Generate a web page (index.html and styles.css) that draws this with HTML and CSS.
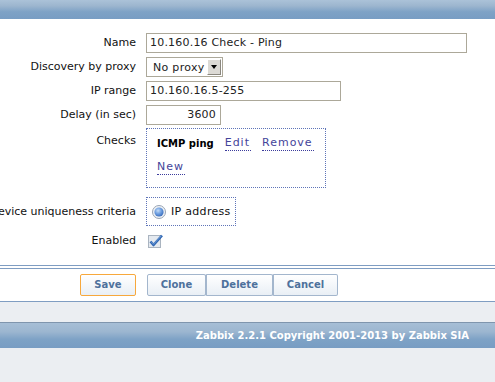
FILE: index.html
```html
<!DOCTYPE html>
<html>
<head>
<meta charset="utf-8">
<link rel="stylesheet" href="styles.css">
</head>
<body>
<div class="header"></div>
<div class="content">
  <div class="form">
    <div class="row">
      <div class="label">Name</div>
      <div class="input wide">10.160.16 Check - Ping</div>
    </div>
    <div class="row">
      <div class="label">Discovery by proxy</div>
      <div class="select"><span class="sel-text">No proxy</span><span class="sel-btn"><span class="tri"></span></span></div>
    </div>
    <div class="row">
      <div class="label">IP range</div>
      <div class="input mid">10.160.16.5-255</div>
    </div>
    <div class="row">
      <div class="label">Delay (in sec)</div>
      <div class="input small num">3600</div>
    </div>
    <div class="row top">
      <div class="label pad">Checks</div>
      <div class="checks">
        <div class="check-line"><span class="bold">ICMP ping</span><span class="link">Edit</span><span class="link">Remove</span></div>
        <div class="check-line second"><span class="link">New</span></div>
      </div>
    </div>
    <div class="row uniq">
      <div class="label">Device uniqueness criteria</div>
      <div class="radio-box">
        <svg class="radio" width="14" height="14" viewBox="0 0 14 14">
          <defs>
            <radialGradient id="rg" cx="0.4" cy="0.35" r="0.7">
              <stop offset="0" stop-color="#c4dcf7"/>
              <stop offset="0.5" stop-color="#6f9fe0"/>
              <stop offset="1" stop-color="#3568b8"/>
            </radialGradient>
          </defs>
          <circle cx="7" cy="7" r="6.5" fill="#eef1f5" stroke="#98a4b4"/>
          <circle cx="7" cy="7" r="4.6" fill="url(#rg)"/>
        </svg>
        <span>IP address</span>
      </div>
    </div>
    <div class="row enabled">
      <div class="label">Enabled</div>
      <svg class="check" width="16" height="14" viewBox="0 0 16 14">
        <rect x="0.5" y="1.5" width="12" height="12" fill="#e4e9ef" stroke="#aab4c0"/>
        <path d="M2.5 7.5 L5.5 11 L14 1.5" fill="none" stroke="#2f66b3" stroke-width="2.6" stroke-linejoin="round"/>
        <path d="M3 7.6 L5.5 10.3 L13.4 1.7" fill="none" stroke="#7fa9e0" stroke-width="0.8"/>
      </svg>
    </div>
  </div>
  <div class="sep"></div>
  <div class="buttons">
    <span class="btn save">Save</span>
    <div class="group">
      <span class="btn">Clone</span><span class="btn">Delete</span><span class="btn">Cancel</span>
    </div>
  </div>
</div>
<div class="gap"></div>
<div class="footer">Zabbix 2.2.1 Copyright 2001-2013 by Zabbix SIA</div>
</body>
</html>
```

FILE: styles.css
```css
html, body {
  margin: 0;
  padding: 0;
}
body {
  background: #ebeef2;
  font-family: "DejaVu Sans", Verdana, sans-serif;
  font-size: 11px;
  color: #111;
  overflow: hidden;
}
.header {
  height: 19px;
  background: linear-gradient(to bottom, #abc2d8 0%, #9db6cf 30%, #7ea2c6 62%, #789dc3 100%);
}
.content {
  background: #fff;
  padding-top: 14px;
  border-bottom: 1px solid #7f9dc2;
}
.form {
  display: flex;
  flex-direction: column;
}
.row {
  display: flex;
  align-items: center;
  gap: 10px;
  margin-bottom: 4px;
}
.row.top {
  align-items: flex-start;
  margin-top: -1px;
}
.row.uniq {
  margin-top: 5px;
  margin-bottom: 8px;
}
.label {
  width: 136px;
  flex: none;
  display: flex;
  justify-content: flex-end;
  white-space: nowrap;
  line-height: 14px;
}
.label.pad {
  padding-top: 6px;
}
.input {
  box-sizing: border-box;
  height: 20px;
  border: 1px solid #aca899;
  line-height: 18px;
  padding: 0 3px;
  color: #222;
  white-space: nowrap;
  overflow: hidden;
  letter-spacing: 0.2px;
}
.input.wide { width: 321px; }
.input.mid { width: 195px; }
.input.small { width: 75px; }
.input.num { text-align: right; padding-right: 4px; }
.select {
  box-sizing: border-box;
  width: 77px;
  height: 20px;
  border: 1px solid #aca899;
  display: flex;
  align-items: center;
  justify-content: space-between;
  padding: 0 1px 0 6px;
  color: #222;
  letter-spacing: 0.3px;
}
.sel-btn {
  box-sizing: border-box;
  width: 14px;
  height: 16px;
  background: #dcdad5;
  border-top: 1px solid #fff;
  border-left: 1px solid #fff;
  border-right: 1px solid #8a877f;
  border-bottom: 1px solid #8a877f;
  display: flex;
  align-items: center;
  justify-content: center;
}
.tri {
  width: 0;
  height: 0;
  border-left: 3.5px solid transparent;
  border-right: 3.5px solid transparent;
  border-top: 4px solid #000;
}
.checks {
  box-sizing: border-box;
  width: 180px;
  height: 60px;
  border: 1px dotted #5e74b8;
  padding: 6px 10px 0;
}
.check-line {
  display: flex;
  align-items: center;
  gap: 11px;
  height: 16px;
}
.check-line.second {
  margin-top: 8px;
}
.bold {
  font-weight: bold;
  font-size: 10px;
  color: #000;
  margin-right: 0;
}
.link {
  display: inline-block;
  line-height: 13px;
  padding: 0 1px 1px 0;
  border-bottom: 1px dotted #3c3c9c;
  color: #44449a;
  letter-spacing: 1px;
}
.radio-box {
  box-sizing: border-box;
  width: 90px;
  height: 29px;
  border: 1px dotted #5e74b8;
  display: flex;
  align-items: center;
  gap: 5px;
  padding-left: 5px;
  letter-spacing: 0.3px;
}
.radio {
  display: block;
  flex: none;
}
.check {
  display: block;
  margin-left: 2px;
}
.row.enabled {
  margin-bottom: 0;
}
.sep {
  margin-top: 17px;
  height: 2px;
  border-top: 1px solid #7f9dc2;
  border-bottom: 1px solid #7f9dc2;
}
.buttons {
  display: flex;
  align-items: center;
  padding: 5px 0 5px 80px;
  gap: 11px;
}
.group {
  display: flex;
}
.btn {
  box-sizing: border-box;
  height: 22px;
  line-height: 20px;
  padding: 0 13px;
  border: 1px solid #a3b6cd;
  border-radius: 2px;
  background: linear-gradient(to bottom, #ffffff 0%, #f4f7fa 50%, #e9eff5 100%);
  color: #4e719c;
  font-weight: bold;
  font-size: 10px;
  white-space: nowrap;
}
.btn.save {
  width: 56px;
  text-align: center;
  padding: 0;
  border-color: #f7a83c;
}
.group .btn + .btn {
  margin-left: -1px;
  border-left-width: 2px;
}
.group .btn:first-child { width: 59px; text-align: center; padding: 0; }
.group .btn:nth-child(2) { width: 68px; text-align: center; padding: 0; }
.group .btn:nth-child(3) { width: 66px; text-align: center; padding: 0; }
.gap {
  height: 20px;
}
.footer {
  height: 26px;
  box-sizing: border-box;
  border-top: 1px solid #7f95ad;
  background: linear-gradient(to bottom, #a6bed6 0%, #9cb6d0 35%, #7ea2c6 65%, #789dc3 100%);
  color: #fff;
  font-weight: bold;
  font-size: 10px;
  line-height: 25px;
  text-align: right;
  padding-right: 26px;
  white-space: nowrap;
}
```
